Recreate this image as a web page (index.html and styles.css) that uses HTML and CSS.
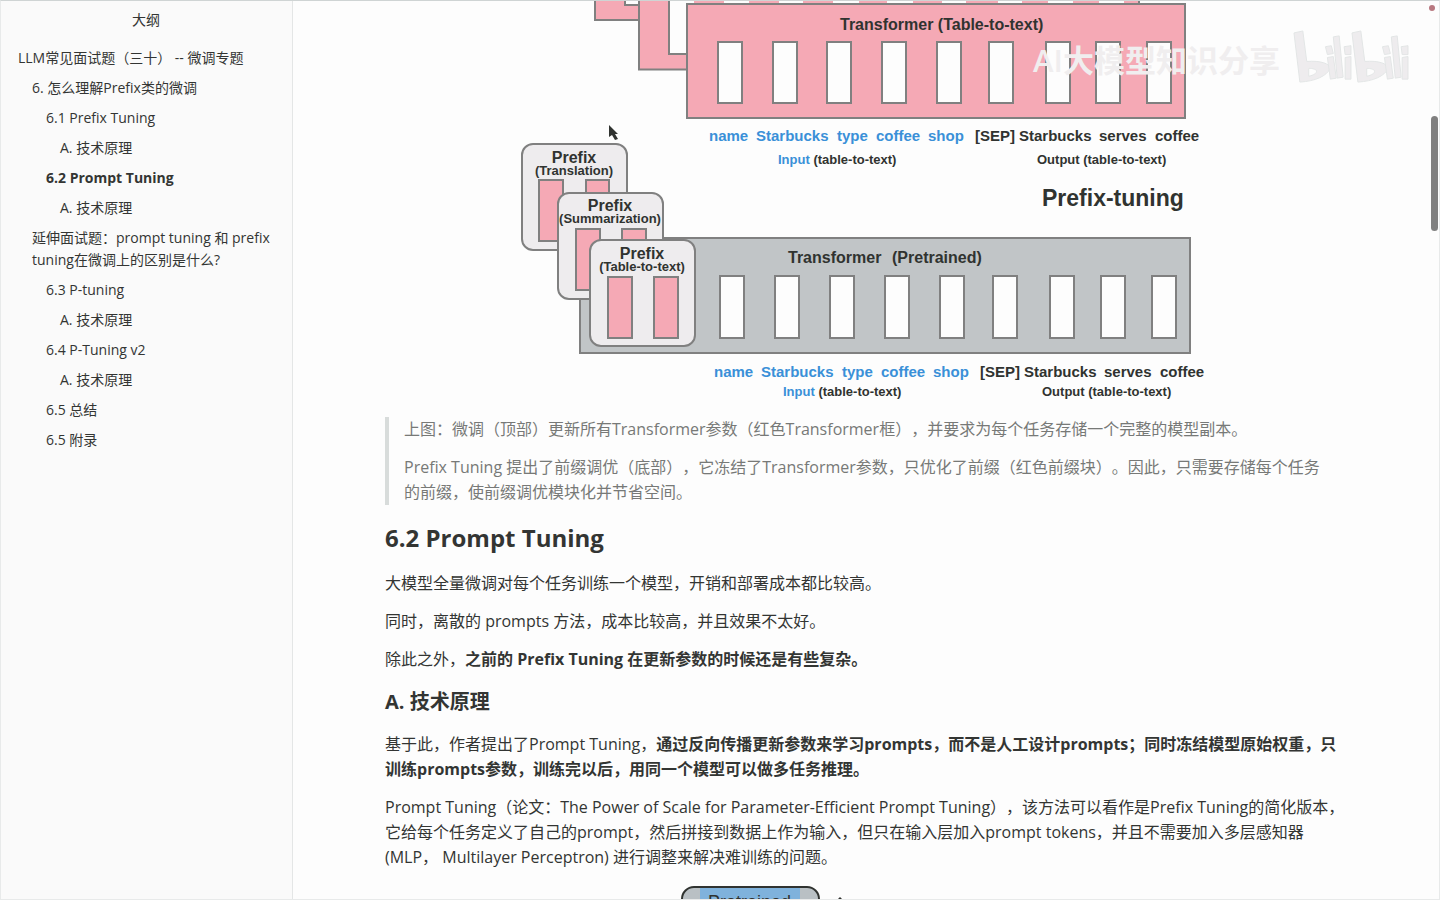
FILE: index.html
```html
<!DOCTYPE html>
<html lang="zh-CN">
<head>
<meta charset="utf-8">
<title>LLM常见面试题（三十） -- 微调专题</title>
<link rel="stylesheet" href="styles.css">
</head>
<body>
<div class="window">
  <aside class="sidebar">
    <h2 class="sidebar-title">大纲</h2>
    <nav class="outline" aria-label="大纲">
      <a class="lv1" href="#top">LLM常见面试题（三十） -- 微调专题</a>
      <a class="lv2" href="#s6">6. 怎么理解Prefix类的微调</a>
      <a class="lv3" href="#s61">6.1 Prefix Tuning</a>
      <a class="lv4" href="#s61a">A. 技术原理</a>
      <a class="lv3 active" href="#s62">6.2 Prompt Tuning</a>
      <a class="lv4" href="#s62a">A. 技术原理</a>
      <a class="lv2" href="#ext">延伸面试题：prompt tuning 和 prefix tuning在微调上的区别是什么?</a>
      <a class="lv3" href="#s63">6.3 P-tuning</a>
      <a class="lv4" href="#s63a">A. 技术原理</a>
      <a class="lv3" href="#s64">6.4 P-Tuning v2</a>
      <a class="lv4" href="#s64a">A. 技术原理</a>
      <a class="lv3" href="#s65">6.5 总结</a>
      <a class="lv3" href="#s65b">6.5 附录</a>
    </nav>
  </aside>

  <main class="page">
    <article class="doc">
      <svg class="figure" viewBox="518 0 694 404" role="img" aria-label="Fine-tuning 与 Prefix-tuning 对比">
        <g class="pink-box">
          <rect x="595" y="-60" width="200" height="80"/>
          <rect class="cell" x="625" y="-50" width="25" height="55"/>
          <rect x="639" y="-60" width="500" height="129.5"/>
          <rect class="cell" x="669" y="-20" width="25" height="74"/>
        </g>
        <rect class="strip" x="690" y="0" width="446" height="5"/>
        <path class="strip-gaps" d="M694 2h30M749 2h30M803 2h30M859 2h28M913 2h29M966 2h32M1022 2h26M1073 2h26M1124 2h12"/>
        <g class="pink-box">
          <rect x="687" y="4" width="498" height="114"/>
          <g class="cell">
            <rect x="718" y="42" width="24" height="61"/><rect x="773" y="42" width="24" height="61"/><rect x="827" y="42" width="24" height="61"/><rect x="882" y="42" width="24" height="61"/><rect x="937" y="42" width="24" height="61"/><rect x="989" y="42" width="24" height="61"/><rect x="1046" y="42" width="24" height="61"/><rect x="1096" y="42" width="24" height="61"/><rect x="1147" y="42" width="24" height="61"/>
          </g>
        </g>
        <text class="t16" x="840" y="30">Transformer (Table-to-text)</text>
        <g class="t15">
          <g class="blue"><text x="709" y="141">name</text><text x="756" y="141">Starbucks</text><text x="837" y="141">type</text><text x="876" y="141">coffee</text><text x="928" y="141">shop</text></g>
          <text x="975" y="141">[SEP]</text><text x="1019" y="141">Starbucks</text><text x="1099" y="141">serves</text><text x="1155" y="141">coffee</text>
        </g>
        <g class="t13"><text x="778" y="164"><tspan class="blue">Input</tspan> (table-to-text)</text><text x="1037" y="164">Output (table-to-text)</text></g>
        <text class="t23" x="1042" y="206">Prefix-tuning</text>

        <rect class="gray-box" x="580" y="238" width="610" height="115"/>
        <g class="cell">
          <rect x="720" y="276" width="24" height="62"/><rect x="775" y="276" width="24" height="62"/><rect x="830" y="276" width="24" height="62"/><rect x="885" y="276" width="24" height="62"/><rect x="940" y="276" width="24" height="62"/><rect x="993" y="276" width="24" height="62"/><rect x="1050" y="276" width="24" height="62"/><rect x="1101" y="276" width="24" height="62"/><rect x="1152" y="276" width="24" height="62"/>
        </g>
        <text class="t16" x="788" y="263">Transformer</text><text class="t16" x="892" y="263">(Pretrained)</text>
        <g class="t15">
          <g class="blue"><text x="714" y="377">name</text><text x="761" y="377">Starbucks</text><text x="842" y="377">type</text><text x="881" y="377">coffee</text><text x="933" y="377">shop</text></g>
          <text x="980" y="377">[SEP]</text><text x="1024" y="377">Starbucks</text><text x="1104" y="377">serves</text><text x="1160" y="377">coffee</text>
        </g>
        <g class="t13"><text x="783" y="396"><tspan class="blue">Input</tspan> (table-to-text)</text><text x="1042" y="396">Output (table-to-text)</text></g>

        <g class="card">
          <rect x="522" y="144" width="105" height="106" rx="11"/>
          <rect class="bar" x="539" y="180" width="24" height="61"/><rect class="bar" x="586" y="180" width="23" height="61"/>
          <text class="t16" x="574" y="163">Prefix</text><text class="t13" x="574" y="175">(Translation)</text>
        </g>
        <g class="card">
          <rect x="558" y="193" width="105" height="106" rx="11"/>
          <rect class="bar" x="576" y="229" width="24" height="61"/><rect class="bar" x="622" y="229" width="24" height="61"/>
          <text class="t16" x="610" y="211">Prefix</text><text class="t13" x="610" y="223">(Summarization)</text>
        </g>
        <g class="card">
          <rect x="590" y="240" width="105" height="106" rx="11"/>
          <rect class="bar" x="608" y="277" width="24" height="61"/><rect class="bar" x="654" y="277" width="24" height="61"/>
          <text class="t16" x="642" y="259">Prefix</text><text class="t13" x="642" y="271">(Table-to-text)</text>
        </g>
        <path class="cursor" d="M609 125v12l3-2 3 5 3-1-3-5h3z"/>
      </svg>

      <blockquote class="quote">
        <p>上图：微调（顶部）更新所有Transformer参数（红色Transformer框），并要求为每个任务存储一个完整的模型副本。</p>
        <p>Prefix Tuning 提出了前缀调优（底部），它冻结了Transformer参数，只优化了前缀（红色前缀块）。因此，只需要存储每个任务的前缀，使前缀调优模块化并节省空间。</p>
      </blockquote>

      <h3 id="s62">6.2 Prompt Tuning</h3>
      <p>大模型全量微调对每个任务训练一个模型，开销和部署成本都比较高。</p>
      <p>同时，离散的 prompts 方法，成本比较高，并且效果不太好。</p>
      <p>除此之外，<strong>之前的 Prefix Tuning 在更新参数的时候还是有些复杂。</strong></p>
      <h4 id="s62a">A. 技术原理</h4>
      <p>基于此，作者提出了Prompt Tuning，<strong>通过反向传播更新参数来学习prompts，而不是人工设计prompts；同时冻结模型原始权重，只训练prompts参数，训练完以后，用同一个模型可以做多任务推理。</strong></p>
      <p>Prompt Tuning（论文：The Power of Scale for Parameter-Efficient Prompt Tuning），该方法可以看作是Prefix Tuning的简化版本，它给每个任务定义了自己的prompt，然后拼接到数据上作为输入，但只在输入层加入prompt tokens，并且不需要加入多层感知器 (MLP， Multilayer Perceptron) 进行调整来解决难训练的问题。</p>
      <svg class="figure" viewBox="518 883 694 60" role="img" aria-label="Prompt Tuning 示意图">
        <rect class="model" x="682" y="888" width="137" height="50" rx="12"/>
        <rect class="selection" x="700" y="889" width="100" height="40"/>
        <text class="t18" x="708" y="909">Pretrained</text>
        <path class="cursor" d="M838 900l2-2 2 2z"/>
      </svg>
    </article>

    <div class="watermark" aria-hidden="true">
      <span>AI大模型知识分享</span>
      <svg class="bili" viewBox="0 0 120 56">
        <path fill-rule="evenodd" d="M2 4l9-2 4 31c14-1 23 2 24 7-4 8-15 13-31 14zM17 40v8c5-1 8-3 8-5s-4-3-8-3zM61 4l9-2 4 31c14-1 23 2 24 7-4 8-15 13-31 14zM76 40v8c5-1 8-3 8-5s-4-3-8-3z"/>
        <path d="M34 18l6-1 2 8-6 1zM36 29l6-1 3 22-6 1zM42 8l6-1 4 42-6 1zM53 18l7-1v9l-6 0zM54 29l6-1v23l-6 0zM92 18l6-1 2 8-6 1zM94 29l6-1 3 22-6 1zM101 8l6-1 4 42-6 1zM111 18l7-1v9l-6 0zM112 29l6-1v23l-6 0z"/>
      </svg>
    </div>
    <span class="rec-dot"></span>
    <span class="thumb"></span>
  </main>
</div>
</body>
</html>
```

FILE: styles.css
```css
* { box-sizing: border-box; }

body {
  margin: 0;
  color: #333533;
  background: #fdfdfd;
  font: 16px/25px "Open Sans", "Noto Sans CJK SC", sans-serif;
  text-spacing-trim: space-all;
}

.window {
  display: flex;
  height: 100vh;
  overflow: hidden;
  border: 1px solid #e8eaea;
  border-top-color: #cfd4d4;
}

.sidebar {
  flex: none;
  width: 292px;
  padding: 8px 18px 0 17px;
  border-right: 1px solid #e4e6e6;
  background: #fafafa;
  font-size: 14px;
  line-height: 22px;
}

.sidebar-title {
  margin: 0 0 12px;
  font-size: 14px;
  font-weight: 400;
  text-align: center;
}

.outline { display: flex; flex-direction: column; }
.outline a { padding: 4px 0; color: inherit; text-decoration: none; }
.outline .lv2 { padding-left: 14px; }
.outline .lv3 { padding-left: 28px; }
.outline .lv4 { padding-left: 42px; }
.outline .active { font-weight: 700; }

.page {
  position: relative;
  flex: 1;
  min-width: 0;
  overflow: hidden;
}

.doc { margin: 0 94px 0 92px; }
.doc p { margin: 0 0 13px; }

.figure {
  display: block;
  width: 694px;
  max-width: 100%;
  margin: -1px auto 13px;
  font-family: "Liberation Sans", Arial, sans-serif;
  font-weight: 700;
}

.quote {
  margin: 0 0 18px;
  padding: 0 15px;
  border-left: 4px solid #d8dcdb;
  color: #777977;
}
.quote p:last-child { margin-bottom: 0; }

h3 { margin: 0 0 18px; font-size: 24px; line-height: 30px; }
h4 { margin: 0 0 17px; padding-top: 4px; font-size: 20px; line-height: 26px; }

.figure text { fill: #303330; }
.figure .blue, .figure .blue text { fill: #3a90d8; }
.pink-box rect { fill: #f5a9b5; stroke: #808080; stroke-width: 2; }
.cell rect, .pink-box .cell, .pink-box .cell rect { fill: #fdfdfd; stroke: #808080; stroke-width: 2; }
.strip { fill: #fdfdfd; }
.strip-gaps { stroke: #f5a9b5; stroke-width: 4; }
.gray-box { fill: #c1c5c7; stroke: #808080; stroke-width: 2; }
.card rect { fill: #eeecee; stroke: #808080; stroke-width: 2; }
.card .bar { fill: #f5a9b5; }
.card text { text-anchor: middle; }
.model { fill: #b9c0c4; stroke: #303330; stroke-width: 2; }
.selection { fill: #7fb2dc; }
.cursor { fill: #303330; }
.t13 { font-size: 13px; }
.t15 { font-size: 15px; }
.t16 { font-size: 16px; }
.t18 { font-size: 18px; font-weight: 400; }
.t23 { font-size: 23px; }

.watermark {
  position: absolute;
  top: 28px;
  right: 29px;
  display: flex;
  align-items: flex-start;
  gap: 12px;
  color: #f0eeef;
  font-size: 31px;
  font-weight: 600;
  line-height: 62px;
  white-space: nowrap;
}
.bili { width: 118px; fill: #eeecee; stroke: #e2e5e5; stroke-width: 1; }

.rec-dot {
  position: absolute;
  top: 4px;
  right: 4px;
  width: 6px;
  height: 6px;
  border-radius: 3px;
  background: #b87880;
}

.thumb {
  position: absolute;
  top: 115px;
  right: 1px;
  width: 7px;
  height: 115px;
  border-radius: 4px;
  background: #808080;
}
```
